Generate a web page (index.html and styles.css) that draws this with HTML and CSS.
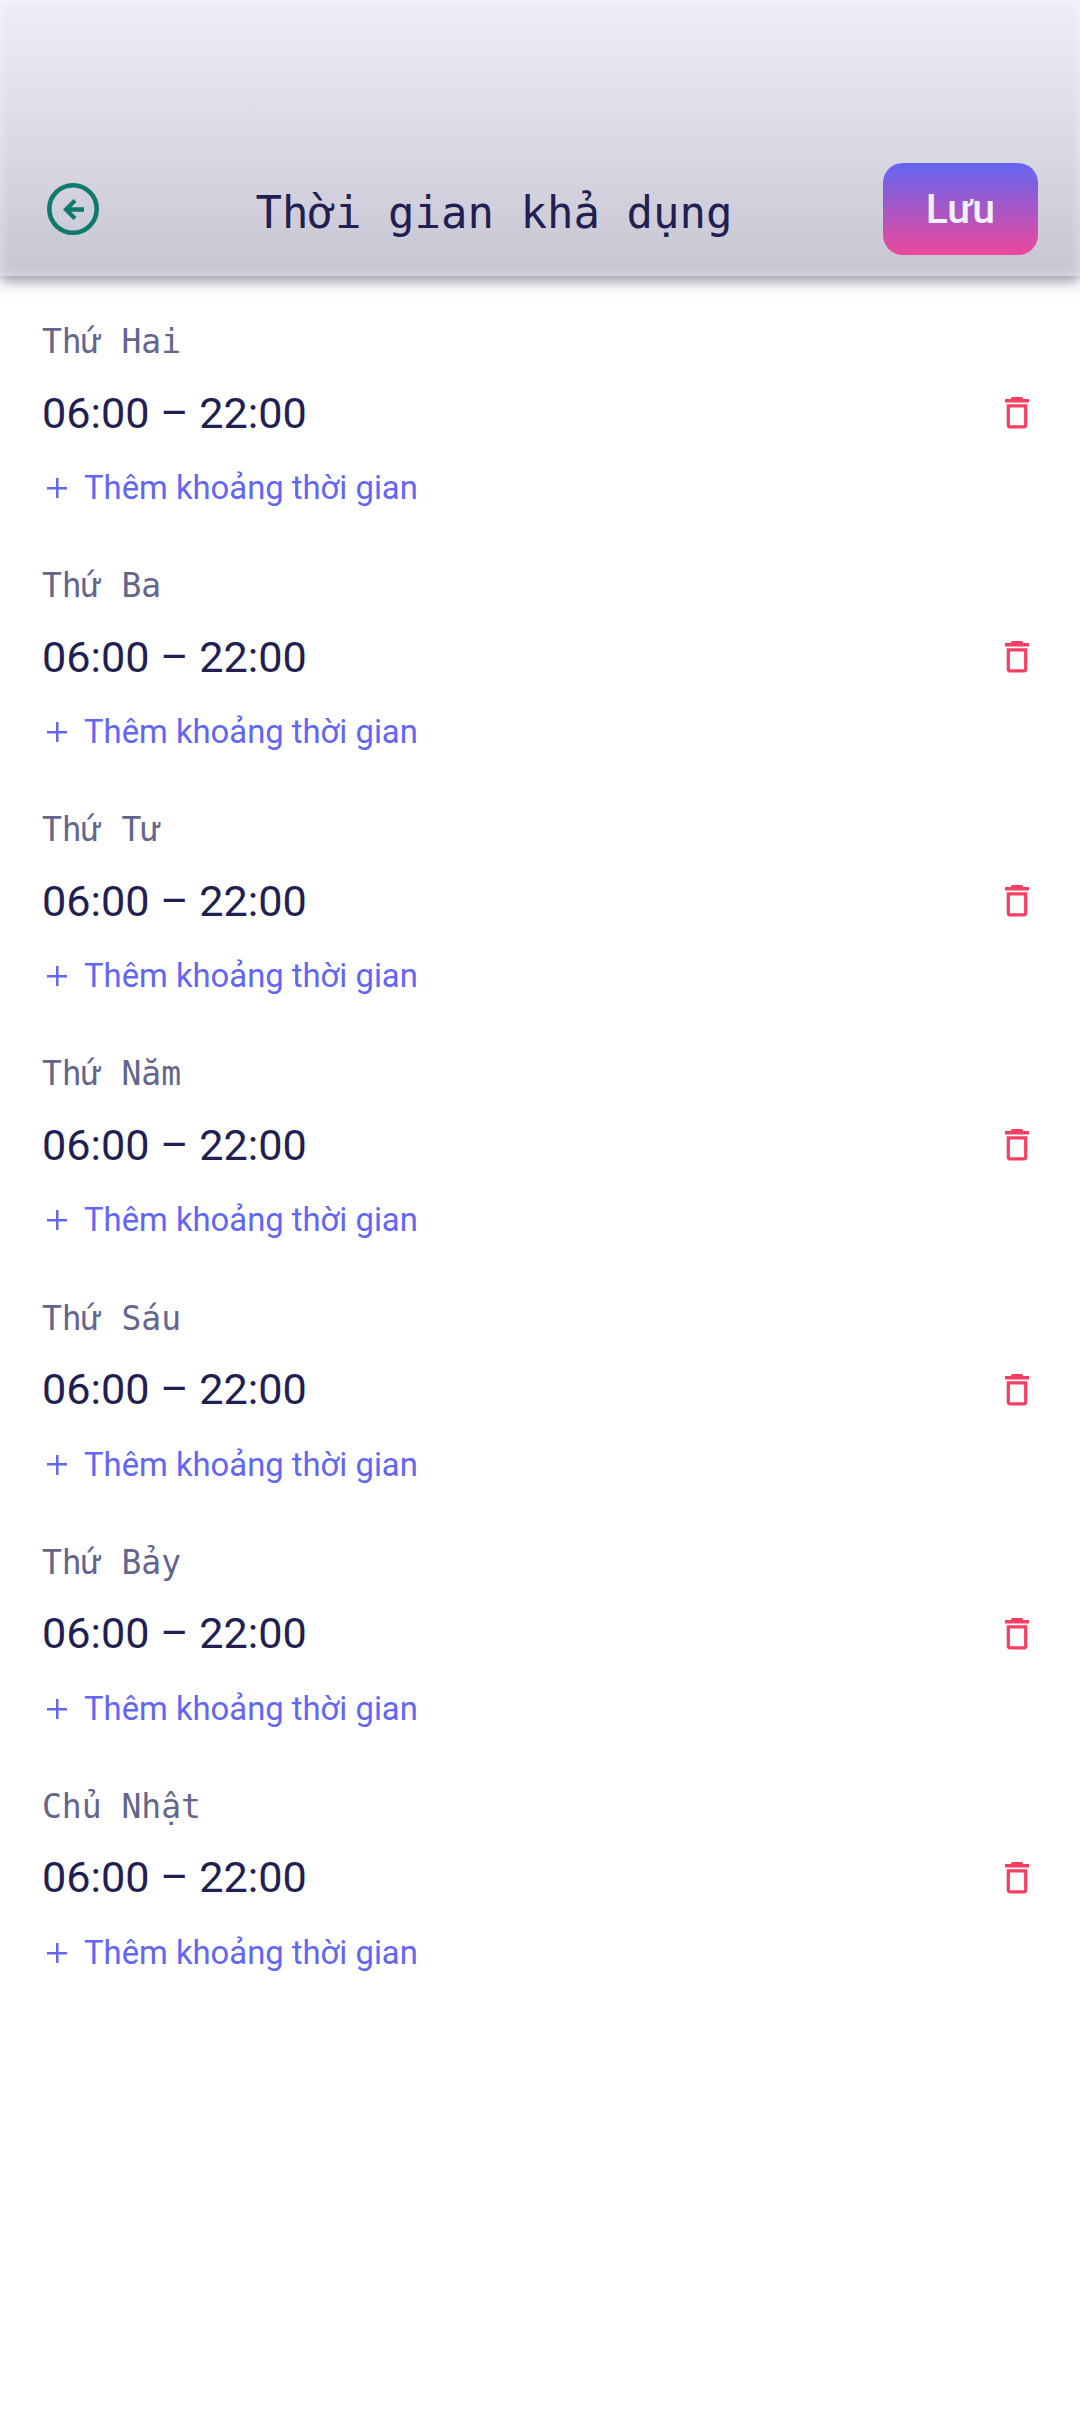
FILE: index.html
```html
<!DOCTYPE html>
<html lang="vi">
<head>
    <meta charset="UTF-8">
    <meta name="viewport" content="width=device-width, initial-scale=1.0">
    <title>Thời gian khả dụng</title>
    <link rel="stylesheet" href="styles.css">
</head>
<body>
    <header class="top-bar">
        <button class="back-btn" aria-label="Quay lại">
            <svg width="52" height="52" viewBox="0 0 52 52">
                <circle cx="26" cy="26" r="23.7" fill="none" stroke="#0f7a6c" stroke-width="4.6"/>
                <path d="M26.5 16 L16 26.5 L26.5 37 L29.5 34 L24.2 28.8 H37 V24.2 H24.2 L29.5 19 Z" fill="#0f7a6c"/>
            </svg>
        </button>
        <h1 class="page-title">Thời gian khả dụng</h1>
        <button class="save-btn">Lưu</button>
    </header>

    <main class="day-list">
        <section class="day">
            <h2 class="day-name">Thứ Hai</h2>
            <div class="slot">
                <span class="slot-time">06:00 – 22:00</span>
                <svg class="trash" width="24" height="32" viewBox="0 0 24 32"><path d="M7 0h10l1.5 2H24v3.5H0V2h5.5z" fill="#f43f63"/><path d="M3.3 8.9h17.4v19.4a1.5 1.5 0 0 1-1.5 1.5H4.8a1.5 1.5 0 0 1-1.5-1.5z" stroke="#f43f63" stroke-width="3.2" fill="none"/></svg>
            </div>
            <a class="add-slot"><span class="plus"></span>Thêm khoảng thời gian</a>
        </section>
        <section class="day">
            <h2 class="day-name">Thứ Ba</h2>
            <div class="slot">
                <span class="slot-time">06:00 – 22:00</span>
                <svg class="trash" width="24" height="32" viewBox="0 0 24 32"><path d="M7 0h10l1.5 2H24v3.5H0V2h5.5z" fill="#f43f63"/><path d="M3.3 8.9h17.4v19.4a1.5 1.5 0 0 1-1.5 1.5H4.8a1.5 1.5 0 0 1-1.5-1.5z" stroke="#f43f63" stroke-width="3.2" fill="none"/></svg>
            </div>
            <a class="add-slot"><span class="plus"></span>Thêm khoảng thời gian</a>
        </section>
        <section class="day">
            <h2 class="day-name">Thứ Tư</h2>
            <div class="slot">
                <span class="slot-time">06:00 – 22:00</span>
                <svg class="trash" width="24" height="32" viewBox="0 0 24 32"><path d="M7 0h10l1.5 2H24v3.5H0V2h5.5z" fill="#f43f63"/><path d="M3.3 8.9h17.4v19.4a1.5 1.5 0 0 1-1.5 1.5H4.8a1.5 1.5 0 0 1-1.5-1.5z" stroke="#f43f63" stroke-width="3.2" fill="none"/></svg>
            </div>
            <a class="add-slot"><span class="plus"></span>Thêm khoảng thời gian</a>
        </section>
        <section class="day">
            <h2 class="day-name">Thứ Năm</h2>
            <div class="slot">
                <span class="slot-time">06:00 – 22:00</span>
                <svg class="trash" width="24" height="32" viewBox="0 0 24 32"><path d="M7 0h10l1.5 2H24v3.5H0V2h5.5z" fill="#f43f63"/><path d="M3.3 8.9h17.4v19.4a1.5 1.5 0 0 1-1.5 1.5H4.8a1.5 1.5 0 0 1-1.5-1.5z" stroke="#f43f63" stroke-width="3.2" fill="none"/></svg>
            </div>
            <a class="add-slot"><span class="plus"></span>Thêm khoảng thời gian</a>
        </section>
        <section class="day">
            <h2 class="day-name">Thứ Sáu</h2>
            <div class="slot">
                <span class="slot-time">06:00 – 22:00</span>
                <svg class="trash" width="24" height="32" viewBox="0 0 24 32"><path d="M7 0h10l1.5 2H24v3.5H0V2h5.5z" fill="#f43f63"/><path d="M3.3 8.9h17.4v19.4a1.5 1.5 0 0 1-1.5 1.5H4.8a1.5 1.5 0 0 1-1.5-1.5z" stroke="#f43f63" stroke-width="3.2" fill="none"/></svg>
            </div>
            <a class="add-slot"><span class="plus"></span>Thêm khoảng thời gian</a>
        </section>
        <section class="day">
            <h2 class="day-name">Thứ Bảy</h2>
            <div class="slot">
                <span class="slot-time">06:00 – 22:00</span>
                <svg class="trash" width="24" height="32" viewBox="0 0 24 32"><path d="M7 0h10l1.5 2H24v3.5H0V2h5.5z" fill="#f43f63"/><path d="M3.3 8.9h17.4v19.4a1.5 1.5 0 0 1-1.5 1.5H4.8a1.5 1.5 0 0 1-1.5-1.5z" stroke="#f43f63" stroke-width="3.2" fill="none"/></svg>
            </div>
            <a class="add-slot"><span class="plus"></span>Thêm khoảng thời gian</a>
        </section>
        <section class="day">
            <h2 class="day-name">Chủ Nhật</h2>
            <div class="slot">
                <span class="slot-time">06:00 – 22:00</span>
                <svg class="trash" width="24" height="32" viewBox="0 0 24 32"><path d="M7 0h10l1.5 2H24v3.5H0V2h5.5z" fill="#f43f63"/><path d="M3.3 8.9h17.4v19.4a1.5 1.5 0 0 1-1.5 1.5H4.8a1.5 1.5 0 0 1-1.5-1.5z" stroke="#f43f63" stroke-width="3.2" fill="none"/></svg>
            </div>
            <a class="add-slot"><span class="plus"></span>Thêm khoảng thời gian</a>
        </section>
    </main>
</body>
</html>
```

FILE: styles.css
```css
body {
    margin: 0;
    height: 2424px;
    overflow: hidden;
    background-color: #fff;
    font-family: Roboto, sans-serif;
}

.top-bar {
    height: 276px;
    box-sizing: border-box;
    padding: 0 42px 21px 47px;
    display: flex;
    align-items: center;
    justify-content: space-between;
    background: linear-gradient(#eeeef8, #c6c5d2);
    box-shadow: 0 5px 13px rgba(60, 58, 95, 0.55), inset 0 0 12px rgba(255, 255, 255, 0.5);
}

/* header row sits at the bottom of the bar, below the status area */
.top-bar > * {
    align-self: flex-end;
}

.back-btn {
    border: none;
    background: none;
    padding: 0;
    margin-bottom: 20px;
    display: flex;
}

.page-title {
    margin: 0 0 17px 6px;
    font-family: "DejaVu Sans Mono", monospace;
    font-size: 44px;
    font-weight: normal;
    color: #221f52;
}

.save-btn {
    width: 155px;
    height: 92px;
    border: none;
    border-radius: 20px;
    background: linear-gradient(#6366f1, #ec4899);
    color: #eef2ff;
    font-family: Roboto, sans-serif;
    font-size: 41px;
    font-weight: 500;
}

.day-list {
    padding: 44px 42px 0 42px;
}

.day {
    height: 244.17px;
}

.day-name {
    margin: 0;
    font-family: "DejaVu Sans Mono", monospace;
    font-size: 33px;
    line-height: 44px;
    font-weight: normal;
    color: #65658c;
}

.slot {
    display: flex;
    justify-content: space-between;
    align-items: center;
    height: 62px;
    margin-top: 18px;
}

.slot-time {
    font-size: 43.2px;
    color: #221f52;
}

.trash {
    margin-right: 9px;
}

.add-slot {
    display: flex;
    align-items: center;
    margin-top: 22px;
    font-size: 32.8px;
    line-height: 44px;
    color: #6366f1;
}

.plus {
    width: 20px;
    height: 20px;
    margin: 0 17px 0 5px;
    background: linear-gradient(#6366f1, #6366f1) center / 100% 2.5px no-repeat,
                linear-gradient(#6366f1, #6366f1) center / 2.5px 100% no-repeat;
}
```
